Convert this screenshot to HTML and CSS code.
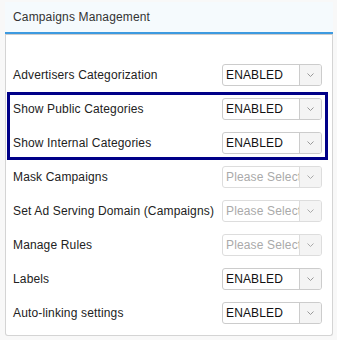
FILE: index.html
```html
<!DOCTYPE html>
<html>
<head>
    <title>Campaigns Management</title>
    <link rel="stylesheet" href="styles.css">
</head>
<body>
    <div class="panel">
        <div class="panel-heading">Campaigns Management</div>
        <div class="panel-body">
            <div class="row">
                <span class="label">Advertisers Categorization</span>
                <div class="select"><span class="value">ENABLED</span><span class="arrow"><svg width="7" height="4" viewBox="0 0 7 4"><polyline points="0.5,0.5 3.5,3.5 6.5,0.5" fill="none" stroke="#999" stroke-width="1"/></svg></span></div>
            </div>

            <!-- highlighted settings -->
            <div class="highlight">
                <div class="row">
                    <span class="label">Show Public Categories</span>
                    <div class="select"><span class="value">ENABLED</span><span class="arrow"><svg width="7" height="4" viewBox="0 0 7 4"><polyline points="0.5,0.5 3.5,3.5 6.5,0.5" fill="none" stroke="#999" stroke-width="1"/></svg></span></div>
                </div>
                <div class="row">
                    <span class="label">Show Internal Categories</span>
                    <div class="select"><span class="value">ENABLED</span><span class="arrow"><svg width="7" height="4" viewBox="0 0 7 4"><polyline points="0.5,0.5 3.5,3.5 6.5,0.5" fill="none" stroke="#999" stroke-width="1"/></svg></span></div>
                </div>
            </div>

            <div class="row">
                <span class="label">Mask Campaigns</span>
                <div class="select disabled"><span class="value">Please Select</span><span class="arrow"><svg width="7" height="4" viewBox="0 0 7 4"><polyline points="0.5,0.5 3.5,3.5 6.5,0.5" fill="none" stroke="#aaa" stroke-width="1"/></svg></span></div>
            </div>
            <div class="row">
                <span class="label">Set Ad Serving Domain (Campaigns)</span>
                <div class="select disabled"><span class="value">Please Select</span><span class="arrow"><svg width="7" height="4" viewBox="0 0 7 4"><polyline points="0.5,0.5 3.5,3.5 6.5,0.5" fill="none" stroke="#aaa" stroke-width="1"/></svg></span></div>
            </div>
            <div class="row">
                <span class="label">Manage Rules</span>
                <div class="select disabled"><span class="value">Please Select</span><span class="arrow"><svg width="7" height="4" viewBox="0 0 7 4"><polyline points="0.5,0.5 3.5,3.5 6.5,0.5" fill="none" stroke="#aaa" stroke-width="1"/></svg></span></div>
            </div>
            <div class="row">
                <span class="label">Labels</span>
                <div class="select"><span class="value">ENABLED</span><span class="arrow"><svg width="7" height="4" viewBox="0 0 7 4"><polyline points="0.5,0.5 3.5,3.5 6.5,0.5" fill="none" stroke="#999" stroke-width="1"/></svg></span></div>
            </div>
            <div class="row">
                <span class="label">Auto-linking settings</span>
                <div class="select"><span class="value">ENABLED</span><span class="arrow"><svg width="7" height="4" viewBox="0 0 7 4"><polyline points="0.5,0.5 3.5,3.5 6.5,0.5" fill="none" stroke="#999" stroke-width="1"/></svg></span></div>
            </div>
        </div>
    </div>
</body>
</html>
```

FILE: styles.css
```css
body {
    margin: 0;
    padding: 2px 4px 0 5px;
    background: #f8f8f8;
    font-family: "Liberation Sans", Arial, sans-serif;
    font-size: 12px;
    letter-spacing: 0.15px;
    color: #333;
}

.panel {
    width: 328px;
}

.panel-heading {
    height: 30px;
    display: flex;
    align-items: center;
    padding: 0 8px;
    background-color: #f5fafd;
    border-bottom: 2px solid #3d9ae0;
    color: #333;
}

.panel-body {
    background: #fff;
    border: 1px solid #d4d4d4;
    border-top-color: #ccc;
    border-radius: 0 0 3px 3px;
    padding: 23px 10px 5px 7px;
}

.row {
    height: 34px;
    display: flex;
    align-items: center;
    justify-content: space-between;
}

.label {
    color: #222;
    white-space: nowrap;
}

/* navy box drawn over the two category rows */
.highlight {
    margin: 0 -6px;
    padding: 0 6px;
    outline: 3px solid #000088;
    outline-offset: -3px;
}

.select {
    width: 100px;
    height: 22px;
    box-sizing: border-box;
    display: flex;
    border: 1px solid #ccc;
    border-radius: 3px;
    overflow: hidden;
    background: #fff;
    flex-shrink: 0;
}

.select .value {
    flex: 1;
    min-width: 0;
    padding-left: 3px;
    line-height: 20px;
    white-space: nowrap;
    overflow: hidden;
    color: #111;
}

.select .arrow {
    width: 21px;
    display: flex;
    align-items: center;
    justify-content: center;
    background: #f4f4f4;
    border-left: 1px solid #ccc;
}

.select.disabled {
    border-color: #ddd;
}

.select.disabled .value {
    color: #aaa;
}

.select.disabled .arrow {
    border-left-color: #ddd;
}
```
